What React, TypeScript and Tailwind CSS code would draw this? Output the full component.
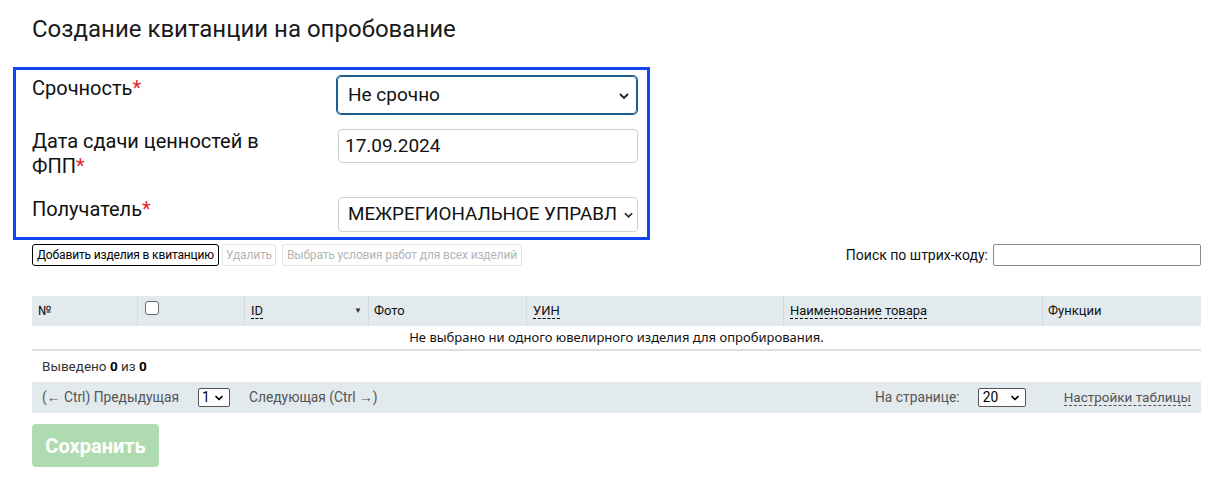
import { ChevronDown } from 'lucide-react';

const sans = "font-['Roboto',sans-serif]";

function Chevron({ className }: { className?: string }) {
  return (
    <svg viewBox="0 0 10 6" className={className} fill="none" stroke="currentColor" strokeWidth="1.8">
      <path d="M1 1 L5 5 L9 1" />
    </svg>
  );
}

function Req() {
  return <span className="text-[#e8262b]">*</span>;
}

export default function App() {
  return (
    <div className={`min-h-screen bg-white pl-[32px] pr-[16px] text-[#111] ${sans}`}>
      {/* Title */}
      <h1 className="pt-[14px] text-[24px] leading-[30px] text-[#1a1a1a]">Создание квитанции на опробование</h1>

      {/* Form box */}
      <div className="mt-[23px] -ml-[19px] w-[637px] border-[3px] border-[#1145f2] pl-[16px] pr-[9px] pt-[5px] pb-[5px]">
        <div className="flex">
          <div className="w-[305px] pt-[1px] text-[20px] leading-[24px]">
            Срочность<Req />
          </div>
          <div className="relative mt-[1px] h-[38px] w-[300px] rounded-[4px] border border-[#1d5f8f] shadow-[0_0_0_1px_#1d5f8f]">
            <div className="flex h-full items-center pl-[10px] text-[19px]">Не срочно</div>
            <Chevron className="absolute right-[7px] top-[16px] h-[6px] w-[10px] text-[#222]" />
          </div>
        </div>

        <div className="mt-[15px] flex">
          <div className="w-[306px] text-[20px] leading-[25px]">
            Дата сдачи ценностей в
            <br />
            ФПП<Req />
          </div>
          <div className="flex h-[34px] w-[300px] items-center rounded-[4px] border border-[#cfcfcf] pl-[6px] text-[19px]">
            17.09.2024
          </div>
        </div>

        <div className="mt-[18px] flex">
          <div className="w-[306px] text-[20px] leading-[24px]">
            Получатель<Req />
          </div>
          <div className="relative h-[35px] w-[300px] overflow-hidden rounded-[4px] border border-[#cfcfcf]">
            <div className="flex h-full items-center whitespace-nowrap pl-[9px] text-[18.8px]">МЕЖРЕГИОНАЛЬНОЕ УПРАВЛ</div>
            <div className="absolute right-0 top-0 flex h-full w-[17px] items-center justify-center bg-white">
              <Chevron className="h-[6px] w-[9px] text-[#222]" />
            </div>
          </div>
        </div>
      </div>

      {/* Buttons + search */}
      <div className="mt-[4px] flex h-[22px] items-center justify-between">
        <div className="flex items-center gap-[3px] tracking-[-0.15px]">
          <button className="h-[22px] rounded-[3px] border border-black bg-white px-[4px] text-[12px] text-black">
            Добавить изделия в квитанцию
          </button>
          <button className="h-[22px] rounded-[3px] border border-[#e3e3e3] bg-white px-[3px] text-[12px] text-[#b5b5b5]">
            Удалить
          </button>
          <button className="ml-[3px] h-[22px] rounded-[3px] border border-[#e3e3e3] bg-white px-[4px] text-[12px] text-[#b5b5b5]">
            Выбрать условия работ для всех изделий
          </button>
        </div>
        <div className="flex items-center gap-[5px] text-[14px]">
          <span>Поиск по штрих-коду:</span>
          <div className="h-[22px] w-[208px] rounded-[2px] border border-[#8a8a8a]" />
        </div>
      </div>

      {/* Table */}
      <div className="mt-[30px] text-[13px]">
        <div className="grid h-[30px] grid-cols-[106px_107px_124px_158px_257px_259px_1fr] bg-[#e2eaee]">
          <div className="flex items-center border-r border-[#d3dadd] pl-[6px]">№</div>
          <div className="flex items-start border-r border-[#d3dadd] pl-[7px] pt-[5px]">
            <div className="h-[14px] w-[14px] rounded-[3px] border border-[#6b6b6b] bg-white" />
          </div>
          <div className="flex items-center justify-between border-r border-[#d3dadd] pl-[6px] pr-[6px]">
            <span className="border-b border-dashed border-black leading-[15px]">ID</span>
            <span className="text-[8px] text-[#333]">▼</span>
          </div>
          <div className="flex items-center border-r border-[#d3dadd] pl-[5px]">Фото</div>
          <div className="flex items-center border-r border-[#d3dadd] pl-[6px]">
            <span className="border-b border-dashed border-black leading-[15px]">УИН</span>
          </div>
          <div className="flex items-center border-r border-[#d3dadd] pl-[6px]">
            <span className="border-b border-dashed border-black leading-[15px]">Наименование товара</span>
          </div>
          <div className="flex items-center pl-[5px]">Функции</div>
        </div>
        <div className="flex h-[25px] items-center justify-center border-b-[2px] border-[#dedede] font-['Noto_Sans',sans-serif] text-[13px]">
          Не выбрано ни одного ювелирного изделия для опробирования.
        </div>

        <div className="flex h-[31px] items-center pl-[10px] text-[13.5px] text-[#333]">
          Выведено&nbsp;<b className="text-black">0</b>&nbsp;из&nbsp;<b className="text-black">0</b>
        </div>

        <div className="flex h-[31px] items-center justify-between bg-[#e2eaee] pl-[10px] pr-[10px] text-[13.8px] text-[#555]">
          <div className="flex items-center">
            <span>(← Ctrl) Предыдущая</span>
            <div className="ml-[19px] flex h-[19px] w-[32px] items-center justify-between rounded-[2px] border border-[#555] bg-white pl-[3px] pr-[4px] text-black">
              <span>1</span>
              <ChevronDown className="h-[12px] w-[12px]" strokeWidth={3.5} />
            </div>
            <span className="ml-[19px]">Следующая (Ctrl →)</span>
          </div>
          <div className="flex items-center">
            <span>На странице:</span>
            <div className="ml-[18px] flex h-[19px] w-[48px] items-center justify-between rounded-[2px] border border-[#555] bg-white pl-[4px] pr-[4px] text-black">
              <span>20</span>
              <ChevronDown className="h-[12px] w-[12px]" strokeWidth={3.5} />
            </div>
            <span className="ml-[38px] border-b border-dashed border-[#555] text-[13.5px] leading-[15px]">Настройки таблицы</span>
          </div>
        </div>
      </div>

      {/* Save */}
      <button className="mt-[11px] h-[43px] w-[127px] rounded-[4px] bg-[#afdbb0] text-[20px] font-bold text-white">
        Сохранить
      </button>
    </div>
  );
}
